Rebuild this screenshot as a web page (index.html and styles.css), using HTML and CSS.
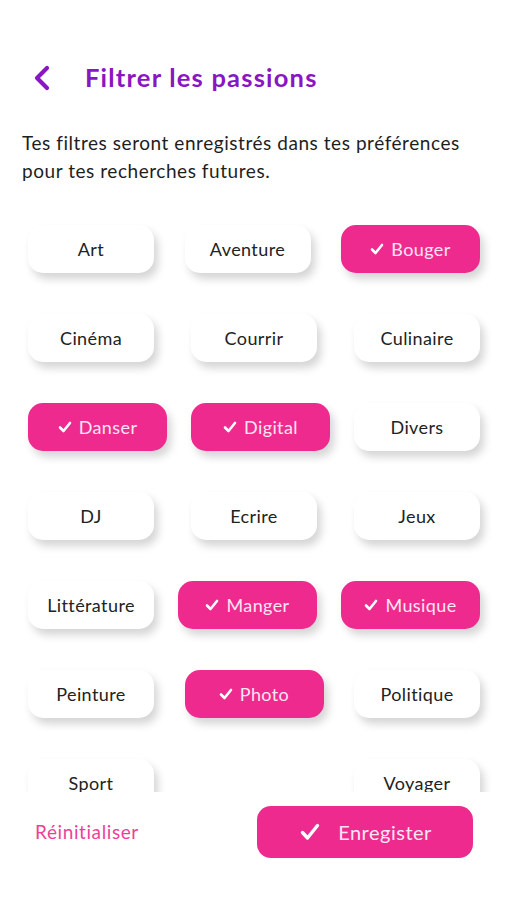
FILE: index.html
```html
<!DOCTYPE html>
<html lang="fr">
<head>
<meta charset="utf-8">
<title>Filtrer les passions</title>
<link rel="stylesheet" href="styles.css">
</head>
<body>
<div class="screen">
  <div class="content">
    <header class="header">
      <svg class="back" width="18" height="26" viewBox="0 0 18 26" aria-hidden="true">
        <polyline points="14,3 4,13 14,23" fill="none" stroke="#8a15c2" stroke-width="4.2" stroke-linecap="round" stroke-linejoin="round"/>
      </svg>
      <h1 class="title">Filtrer les passions</h1>
    </header>
    <p class="intro">Tes filtres seront enregistrés dans tes préférences pour tes recherches futures.</p>
    <div class="chips">
      <div class="row">
        <span class="chip">Art</span>
        <span class="chip">Aventure</span>
        <span class="chip on"><svg class="ck" viewBox="0 0 14 12"><polyline points="2,6.5 5.5,10 12,2" /></svg>Bouger</span>
      </div>
      <div class="row">
        <span class="chip">Cinéma</span>
        <span class="chip">Courrir</span>
        <span class="chip">Culinaire</span>
      </div>
      <div class="row">
        <span class="chip on"><svg class="ck" viewBox="0 0 14 12"><polyline points="2,6.5 5.5,10 12,2" /></svg>Danser</span>
        <span class="chip on"><svg class="ck" viewBox="0 0 14 12"><polyline points="2,6.5 5.5,10 12,2" /></svg>Digital</span>
        <span class="chip">Divers</span>
      </div>
      <div class="row">
        <span class="chip">DJ</span>
        <span class="chip">Ecrire</span>
        <span class="chip">Jeux</span>
      </div>
      <div class="row">
        <span class="chip">Littérature</span>
        <span class="chip on"><svg class="ck" viewBox="0 0 14 12"><polyline points="2,6.5 5.5,10 12,2" /></svg>Manger</span>
        <span class="chip on"><svg class="ck" viewBox="0 0 14 12"><polyline points="2,6.5 5.5,10 12,2" /></svg>Musique</span>
      </div>
      <div class="row">
        <span class="chip">Peinture</span>
        <span class="chip on"><svg class="ck" viewBox="0 0 14 12"><polyline points="2,6.5 5.5,10 12,2" /></svg>Photo</span>
        <span class="chip">Politique</span>
      </div>
      <div class="row">
        <span class="chip">Sport</span>
        <span class="chip">Voyager</span>
      </div>
    </div>
  </div>
  <footer class="footer">
    <span class="reset">Réinitialiser</span>
    <button class="save"><svg class="save-ck" viewBox="0 0 20 18"><polyline points="2.5,9.5 7.5,15 17.5,2.5"/></svg>Enregister</button>
  </footer>
</div>
</body>
</html>
```

FILE: styles.css
```css
html, body {
  margin: 0;
  padding: 0;
  background: #ffffff;
}

body {
  font-family: Lato, "Noto Sans", sans-serif;
  color: #222222;
}

.screen {
  width: 507px;
  height: 900px;
  display: flex;
  flex-direction: column;
}

.content {
  flex: 1 1 auto;
  min-height: 0;
  overflow: hidden;
}

.header {
  display: flex;
  align-items: center;
  padding: 59px 0 0 33px;
  height: 36px;
}

.back {
  flex-shrink: 0;
  margin-top: 1px;
}

.title {
  margin: 0 0 0 34px;
  font-size: 25.5px;
  line-height: 36px;
  font-weight: 700;
  color: #8a15c2;
  letter-spacing: 1.2px;
}

.intro {
  margin: 34px 0 0 22px;
  width: 465px;
  font-size: 19px;
  line-height: 28px;
  color: #1e1e1e;
  letter-spacing: 0.55px;
}

.chips {
  margin-top: 40px;
  padding: 0 27px 0 28px;
  display: flex;
  flex-direction: column;
  gap: 41px;
}

.row {
  display: flex;
  justify-content: space-between;
}

.chip {
  width: 126px;
  height: 48px;
  box-sizing: border-box;
  border-radius: 15px;
  background: #ffffff;
  box-shadow: 4px 6px 9px rgba(0, 0, 0, 0.17);
  display: flex;
  align-items: center;
  justify-content: center;
  font-size: 18px;
  font-weight: 400;
  letter-spacing: 0.4px;
  color: #222222;
}

.chip.on {
  width: 139px;
  background: #ee2a8e;
  color: #fde6f2;
}

.ck {
  width: 14px;
  height: 12px;
  margin-right: 7px;
  fill: none;
  stroke: #ffffff;
  stroke-width: 2.6;
  stroke-linecap: round;
  stroke-linejoin: round;
}

.footer {
  flex: 0 0 108px;
  box-sizing: border-box;
  display: flex;
  justify-content: space-between;
  align-items: flex-start;
  padding: 14px 34px 0 35px;
  background: #ffffff;
}

.reset {
  font-size: 19px;
  line-height: 52px;
  letter-spacing: 0.6px;
  color: #ee3f98;
}

.save {
  width: 216px;
  height: 52px;
  border: none;
  border-radius: 14px;
  background: #ee2a8e;
  color: #fde6f2;
  font-family: Lato, "Noto Sans", sans-serif;
  font-size: 20px;
  letter-spacing: 0.5px;
  display: flex;
  align-items: center;
  justify-content: center;
  padding: 0 0 0 2px;
}

.save-ck {
  width: 20px;
  height: 18px;
  margin-right: 18px;
  fill: none;
  stroke: #ffffff;
  stroke-width: 3.4;
  stroke-linecap: round;
  stroke-linejoin: round;
}
```
